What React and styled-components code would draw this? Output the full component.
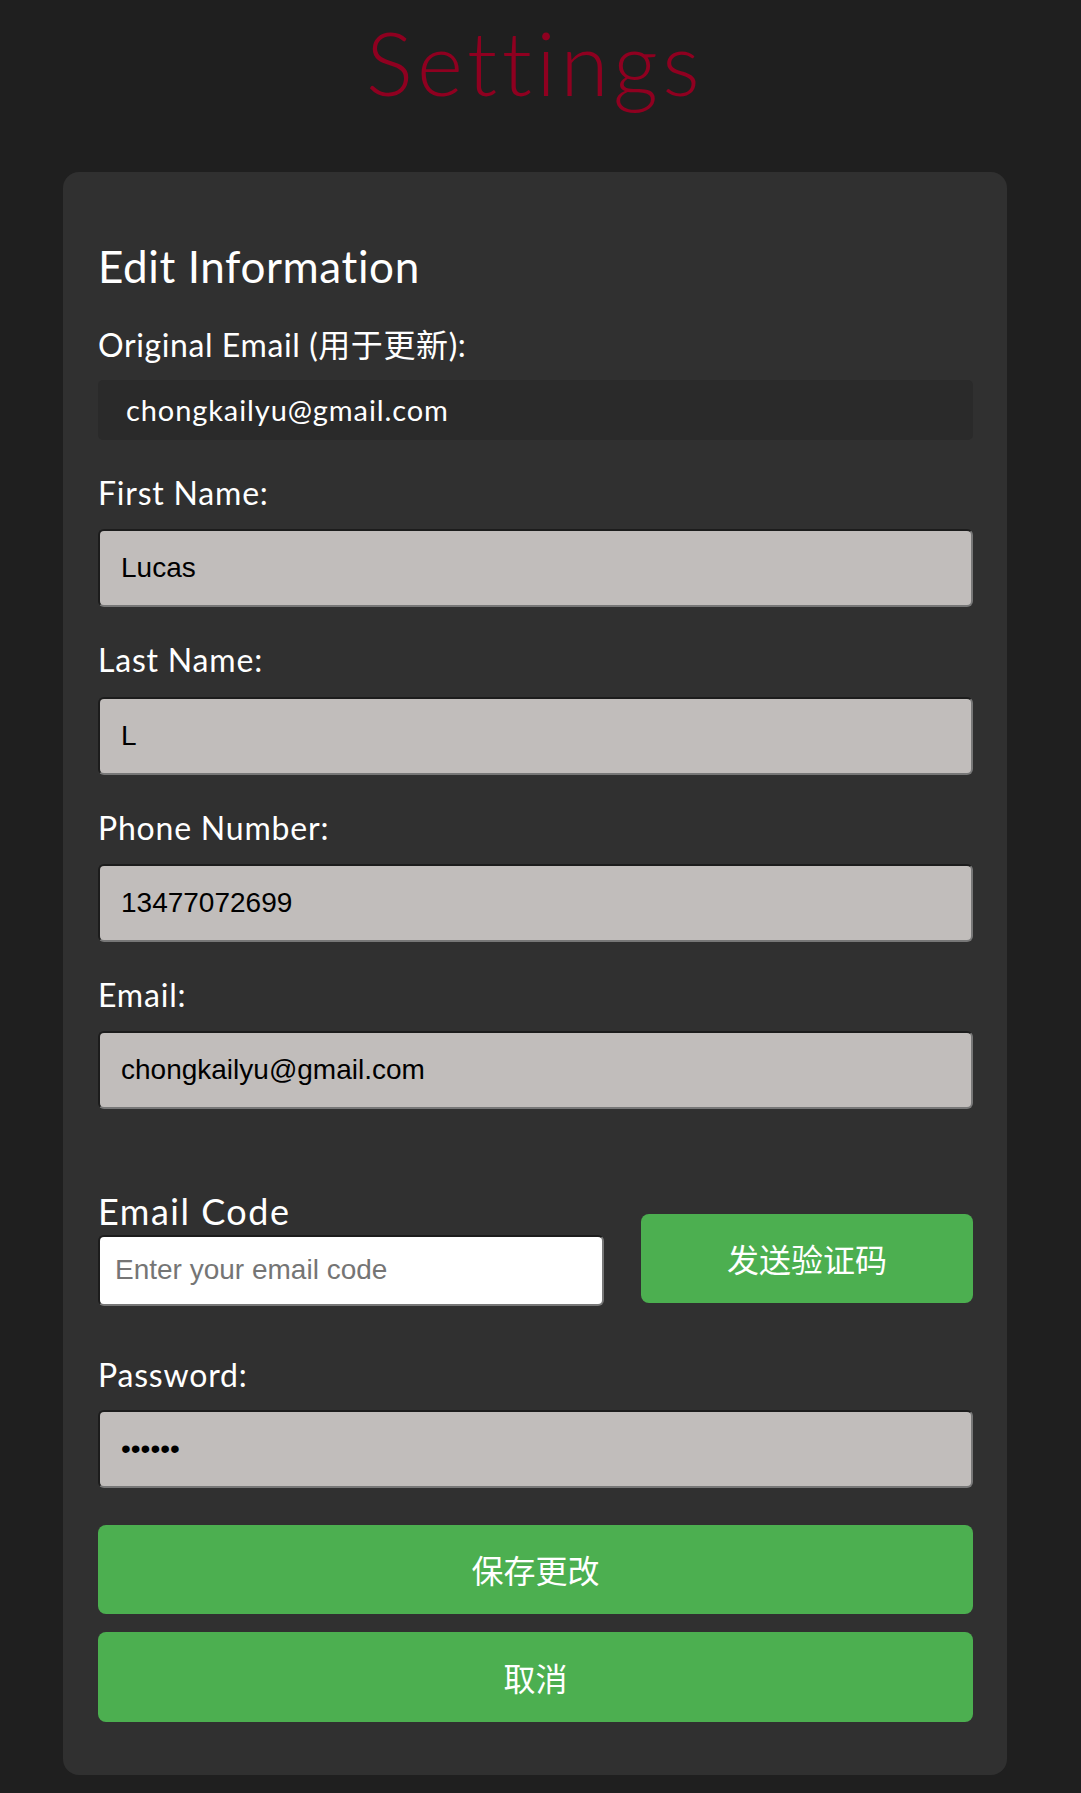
import React from 'react';
import styled, { createGlobalStyle } from 'styled-components';

const GlobalStyle = createGlobalStyle`
  html, body { margin: 0; padding: 0; background: #1f1f1f; }
  body {
    font-family: Lato, "Noto Sans CJK SC", sans-serif;
    font-variant-ligatures: none;
  }
  * { box-sizing: border-box; }
`;

const Page = styled.div`
  width: 944px;
  margin-left: 63px;
  padding-top: 10px;
  padding-bottom: 20px;
`;

const Title = styled.h1`
  margin: 0;
  font-family: Lato, sans-serif;
  font-weight: 300;
  font-size: 88px;
  line-height: 1.2;
  letter-spacing: 4.4px;
  color: #8f0020;
  text-align: center;
  font-variant-ligatures: none;
`;

const Card = styled.div`
  margin-top: 56px;
  background: #303030;
  border-radius: 16px;
  padding: 68px 34px 53px 35px;
  display: flex;
  flex-direction: column;
`;

const Heading = styled.h2`
  margin: 0;
  font-family: Lato, sans-serif;
  font-weight: 400;
  font-size: 44px;
  line-height: 1.2;
  letter-spacing: 0.6px;
  color: #ffffff;
`;

const Field = styled.div`
  display: flex;
  flex-direction: column;
  gap: ${p => p.$inner}px;
  margin-top: ${p => p.$top}px;
  width: ${p => p.$width || 'auto'};
`;

const Label = styled.label`
  font-family: Lato, "Noto Sans CJK SC", sans-serif;
  font-weight: 400;
  font-size: ${p => p.$size || 32}px;
  line-height: 1.2;
  letter-spacing: ${p => p.$spacing || 0.8}px;
  color: #ffffff;
`;

const StaticValue = styled.div`
  height: 60px;
  line-height: 60px;
  padding-left: 28px;
  background: #2a2a2a;
  border-radius: 5px;
  font-family: Lato, sans-serif;
  font-size: 29px;
  letter-spacing: 0.9px;
  color: #ffffff;
`;

const Input = styled.input`
  display: block;
  width: 100%;
  height: ${p => p.$h || 78}px;
  margin: 0;
  padding: 0 0 0 ${p => p.$pad || 21}px;
  background: ${p => (p.$light ? '#ffffff' : '#c1bdbb')};
  border-style: solid;
  border-width: 2px;
  border-color: #1c1c1c #777777 #777777 #1c1c1c;
  border-radius: 6px;
  font-family: "Liberation Sans", Arial, sans-serif;
  font-size: 28px;
  color: #000000;
  outline: none;
  &::placeholder { color: #757575; }
`;

const CodeRow = styled.div`
  display: flex;
  align-items: flex-end;
  justify-content: space-between;
  margin-top: 81px;
`;

const Button = styled.button`
  display: flex;
  align-items: center;
  justify-content: center;
  flex-shrink: 0;
  width: ${p => p.$width || '100%'};
  height: ${p => p.$h || 90}px;
  margin: ${p => p.$top || 0}px 0 ${p => p.$bottom || 0}px 0;
  padding: 0;
  border: none;
  border-radius: 8px;
  background: #4caf50;
  color: #ffffff;
  font-family: "Noto Sans CJK SC", sans-serif;
  font-size: 32px;
  cursor: pointer;
`;

export default function App() {
  return (
    <>
      <GlobalStyle />
      <Page>
        <Title>Settings</Title>
        <Card>
          <Heading>Edit Information</Heading>

          <Field $top={34} $inner={15}>
            <Label $spacing={0.6}>Original Email (用于更新):</Label>
            <StaticValue>chongkailyu@gmail.com</StaticValue>
          </Field>

          <Field $top={34} $inner={17}>
            <Label>First Name:</Label>
            <Input defaultValue="Lucas" />
          </Field>

          <Field $top={34} $inner={17}>
            <Label>Last Name:</Label>
            <Input defaultValue="L" />
          </Field>

          <Field $top={34} $inner={17}>
            <Label>Phone Number:</Label>
            <Input defaultValue="13477072699" />
          </Field>

          <Field $top={34} $inner={17}>
            <Label>Email:</Label>
            <Input defaultValue="chongkailyu@gmail.com" />
          </Field>

          <CodeRow>
            <Field $top={0} $inner={1} $width="506px">
              <Label $size={36} $spacing={1.5}>Email Code</Label>
              <Input $light $h={71} $pad={15} placeholder="Enter your email code" />
            </Field>
            <Button $width="332px" $h={89} $bottom={3}>发送验证码</Button>
          </CodeRow>

          <Field $top={50} $inner={16}>
            <Label>Password:</Label>
            <Input type="password" defaultValue="123456" />
          </Field>

          <Button $top={37} $h={89}>保存更改</Button>
          <Button $top={18}>取消</Button>
        </Card>
      </Page>
    </>
  );
}
